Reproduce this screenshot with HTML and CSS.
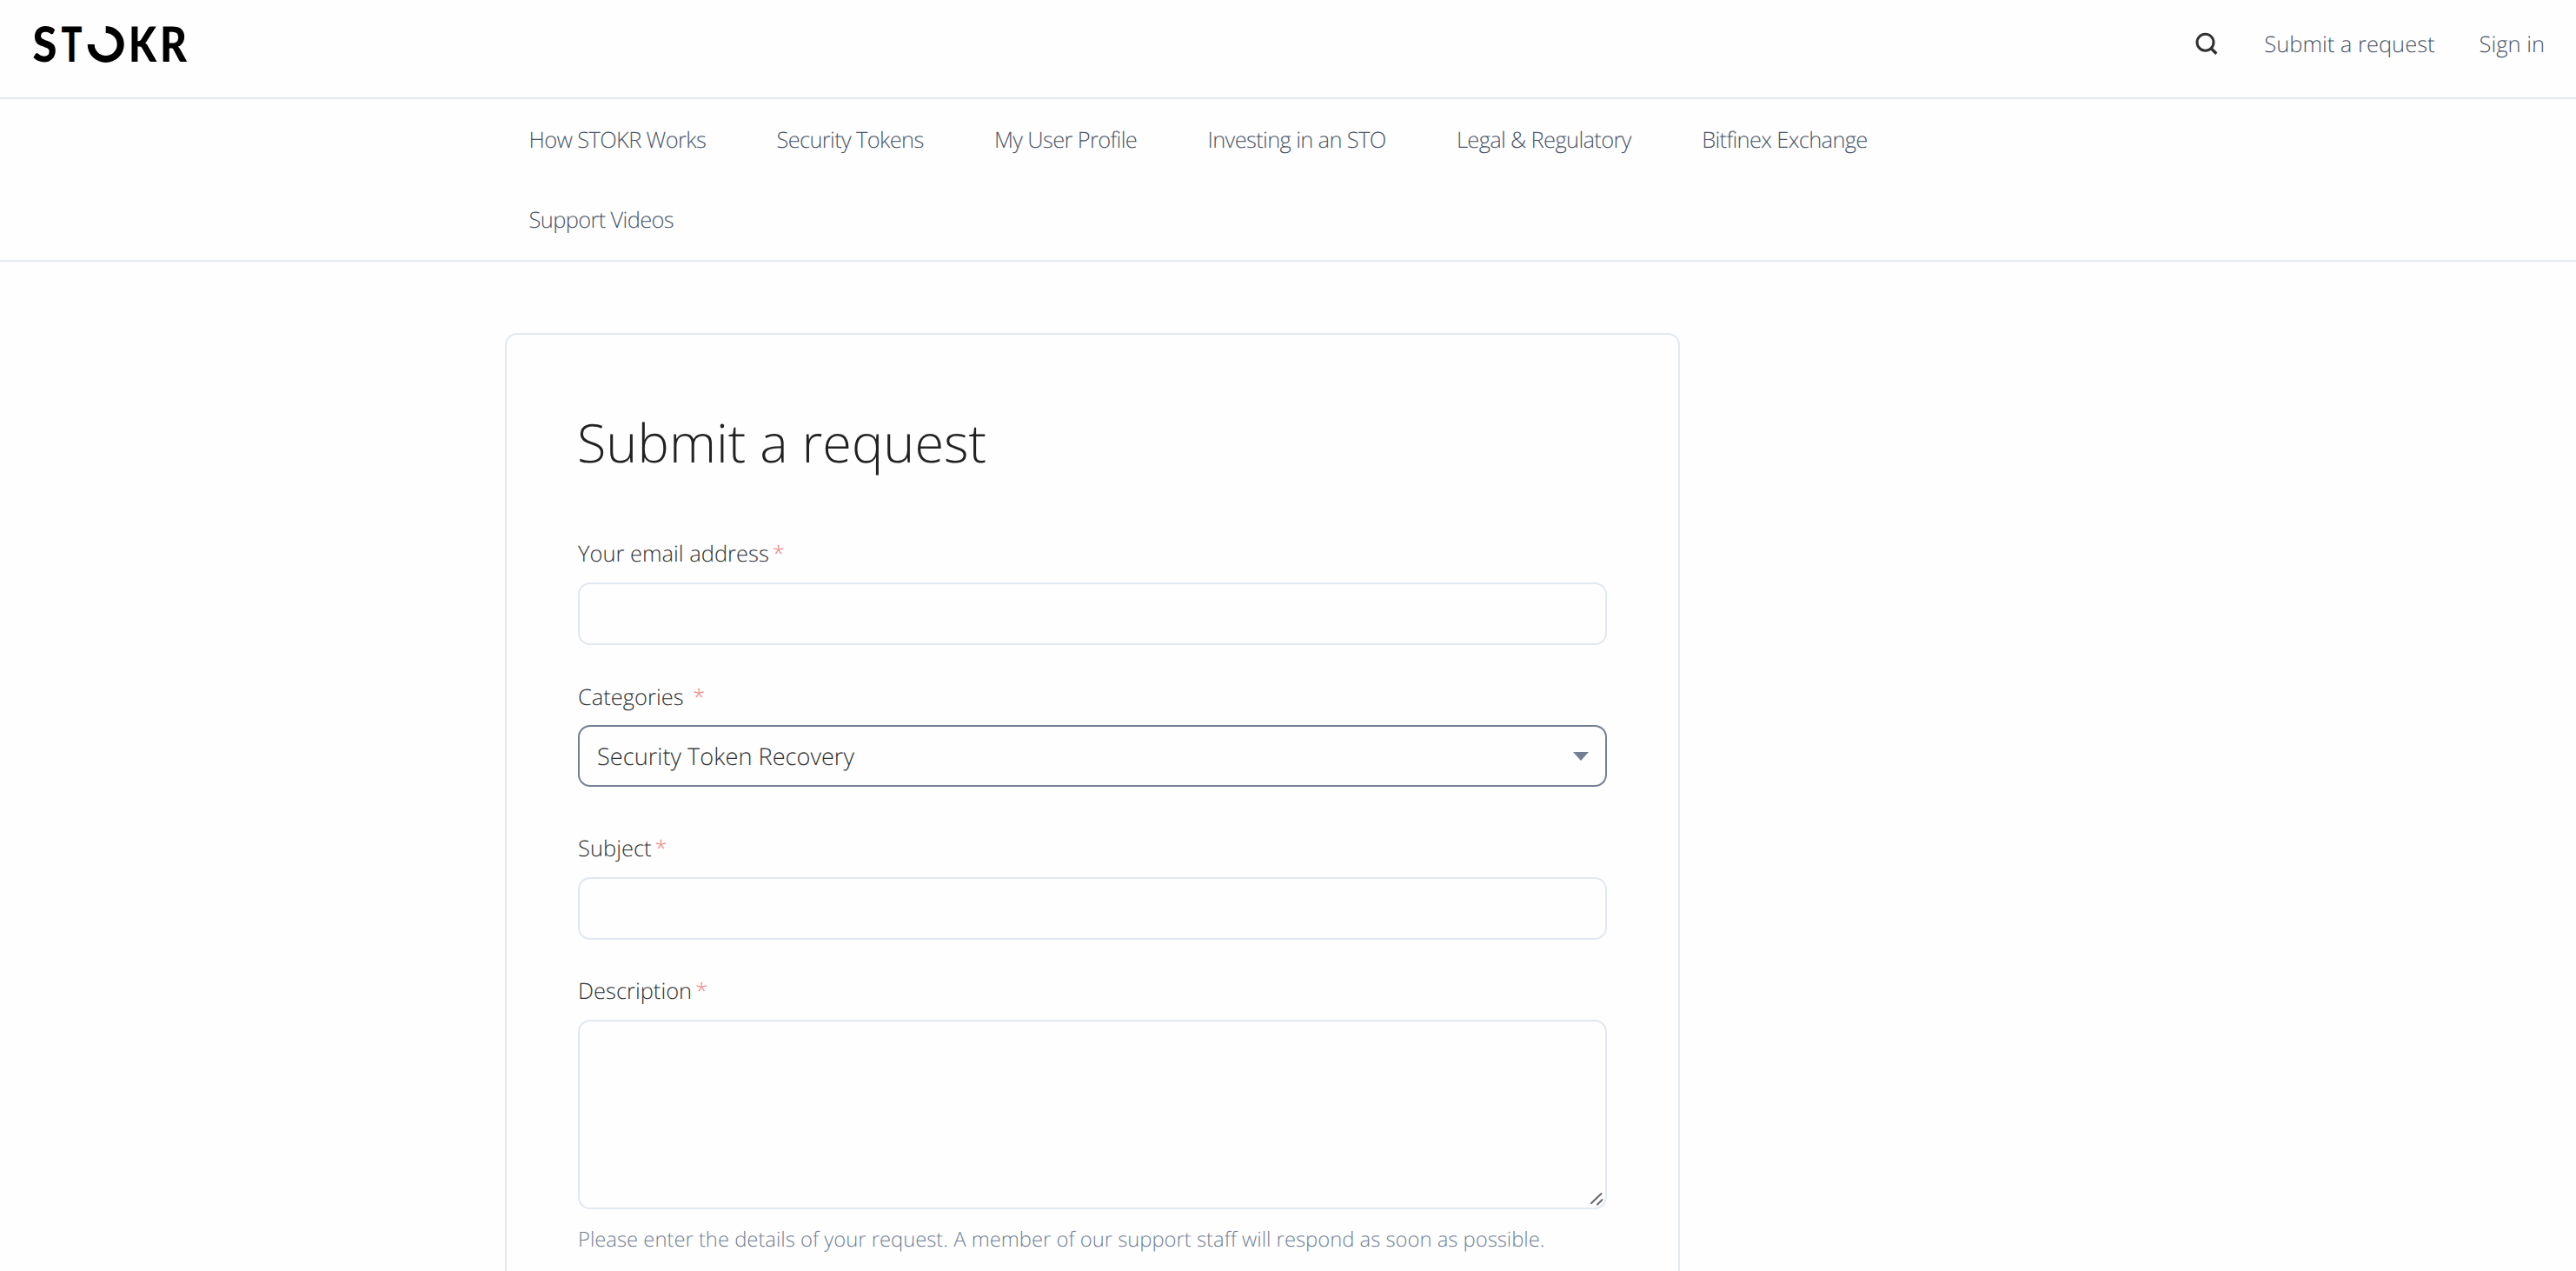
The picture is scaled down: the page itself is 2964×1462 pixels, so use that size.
FILE: index.html
```html
<!DOCTYPE html>
<html lang="en">
<head>
  <meta charset="UTF-8" />
  <meta name="viewport" content="width=device-width, initial-scale=1.0"/>
  <title>Submit a request</title>
  <link rel="stylesheet" href="styles.css">
</head>
<body>
  <header class="header">
    <a class="logo" href="#" aria-label="STOKR">
      <svg width="200" height="90" viewBox="30 5 200 90">
        <g class="logo-text">
          <text x="37.500" y="71" textLength="28" lengthAdjust="spacingAndGlyphs">S</text>
          <text x="70.500" y="71" textLength="24" lengthAdjust="spacingAndGlyphs">T</text>
          <text x="148" y="71" textLength="32" lengthAdjust="spacingAndGlyphs">K</text>
          <text x="184" y="71" textLength="31" lengthAdjust="spacingAndGlyphs">R</text>
        </g>
        <path d="M121.7 34A17 17 0 1 1 104.7 51" fill="none" stroke="#000" stroke-width="8"/>
      </svg>
    </a>
    <div class="user-nav">
      <svg class="search-icon" width="26" height="26" viewBox="0 0 26 26">
        <circle cx="11.5" cy="11.7" r="9.5" fill="none" stroke="#2f3133" stroke-width="3"/>
        <path d="M18 18.5l6.3 6.2" stroke="#2f3133" stroke-width="3.4"/>
      </svg>
      <a class="user-link" href="#">Submit a request</a>
      <a class="user-link" href="#">Sign in</a>
    </div>
  </header>

  <nav class="nav">
    <ul class="nav-list">
      <li><a class="nav-link" href="#">How STOKR Works</a></li>
      <li><a class="nav-link" href="#">Security Tokens</a></li>
      <li><a class="nav-link" href="#">My User Profile</a></li>
      <li><a class="nav-link" href="#">Investing in an STO</a></li>
      <li><a class="nav-link" href="#">Legal &amp; Regulatory</a></li>
      <li><a class="nav-link" href="#">Bitfinex Exchange</a></li>
      <li><a class="nav-link" href="#">Support Videos</a></li>
    </ul>
  </nav>

  <main class="card">
    <h1 class="title">Submit a request</h1>
    <form class="form">
      <div class="field">
        <label for="email">Your email address<span class="required">*</span></label>
        <input class="input" id="email" type="text" />
      </div>
      <div class="field field-category">
        <label for="category">Categories <span class="required">*</span></label>
        <div class="select" id="category" tabindex="0">
          <span>Security Token Recovery</span>
          <svg width="18" height="10" viewBox="0 0 18 10"><path d="M0 0h18L9 10z" fill="#738094"/></svg>
        </div>
      </div>
      <div class="field field-subject">
        <label for="subject">Subject<span class="required">*</span></label>
        <input class="input" id="subject" type="text" />
      </div>
      <div class="field">
        <label for="description">Description<span class="required">*</span></label>
        <div class="textarea-wrap">
          <textarea class="textarea" id="description"></textarea>
          <svg class="grip" width="16" height="16" viewBox="0 0 16 16">
            <path d="M2 13L13.500 2M9 14.500L14.500 9" stroke="#666" stroke-width="2" stroke-linecap="round"/>
          </svg>
        </div>
        <p class="hint">Please enter the details of your request. A member of our support staff will respond as soon as possible.</p>
      </div>
    </form>
  </main>
</body>
</html>
```
FILE: styles.css
```css
* {
  box-sizing: border-box;
}

body {
  margin: 0;
  background-color: #fefefe;
  color: #2f3133;
  font-family: "Open Sans", sans-serif;
  font-size: 25.5px;
  font-weight: 300;
  text-rendering: geometricPrecision;
}

a {
  color: #4a5568;
  text-decoration: none;
}

.header {
  display: flex;
  justify-content: space-between;
  height: 114px;
  padding: 0 36px 0 30px;
  border-bottom: 2px solid #e2e8f0;
}

.logo {
  padding-top: 5px;
}

.logo svg {
  display: block;
}

.logo-text {
  font-family: Lato, sans-serif;
  font-size: 56px;
  font-weight: 900;
  line-height: 1;
  fill: #000;
}

.user-nav {
  display: flex;
  align-items: flex-start;
  padding-top: 30px;
  line-height: 42px;
}

.search-icon {
  margin: 7px 53px 0 0;
}

.user-link + .user-link {
  margin-left: 51px;
}

.nav {
  height: 187px;
  padding-top: 1px;
  border-bottom: 2px solid #e2e8f0;
}

.nav-list {
  display: flex;
  flex-wrap: wrap;
  column-gap: 81.3px;
  width: 1640px;
  margin: 0 0 0 608.5px;
  padding: 0;
  list-style: none;
  line-height: 92px;
}

.nav-link {
  letter-spacing: -0.026em;
}

.card {
  width: 1352px;
  height: 1079px;
  margin: 82px 0 0 581px;
  padding: 76px 82px 0;
  border: 2px solid #e2e8f0;
  border-bottom: 0;
  border-radius: 14px 14px 0 0;
}

.title {
  margin: 0 0 0 -1px;
  font-size: 61.2px;
  font-weight: 300;
  line-height: 96px;
  color: #222;
}

.field {
  margin-top: 39px;
}

.form .field:first-child {
  margin-top: 60px;
}

.form .field-category {
  margin-top: 40px;
}

.form .field-subject {
  margin-top: 51px;
}

label {
  display: block;
  height: 53px;
  line-height: 40px;
}

.field-category label {
  height: 52px;
}

.required {
  margin-left: 4px;
  color: #f47c7c;
}

.input,
.select,
.textarea {
  display: block;
  width: 100%;
  height: 72px;
  border: 2px solid #e2e8f0;
  border-radius: 14px;
  background-color: #fefefe;
  outline: none;
}

.select {
  display: flex;
  align-items: center;
  justify-content: space-between;
  height: 71px;
  padding: 0 19px 0 20px;
  border-color: #738094;
  font-size: 27.2px;
}

.textarea-wrap {
  position: relative;
}

.textarea {
  height: 218px;
  resize: none;
}

.grip {
  position: absolute;
  right: 4px;
  bottom: 4px;
}

.hint {
  margin: 14px 0 0;
  font-size: 23.8px;
  line-height: 40px;
  color: #718096;
  white-space: nowrap;
}
```
